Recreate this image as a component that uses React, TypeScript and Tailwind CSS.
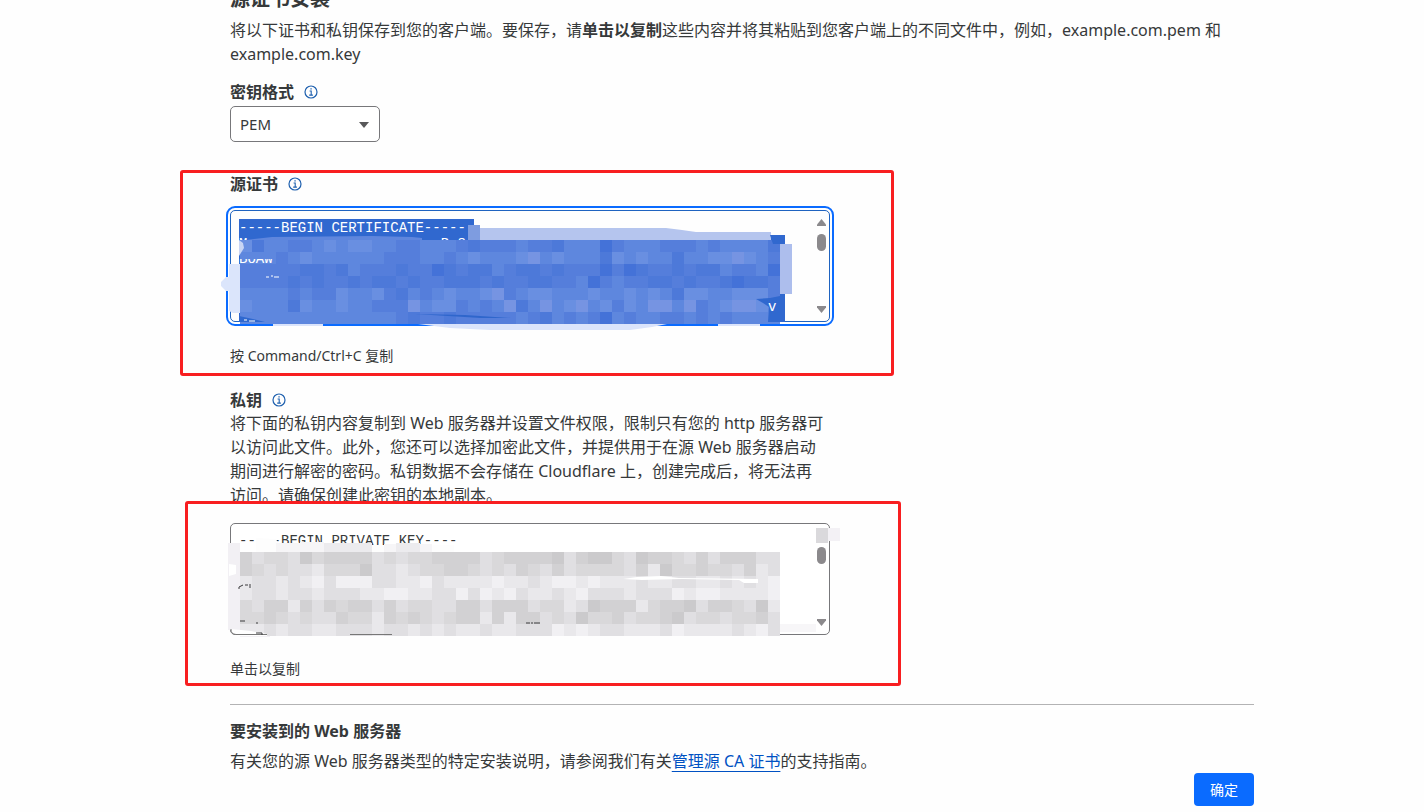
import React from 'react';

const BLUES: Record<string, string> = {
  a: '#4472d8',
  b: '#4d79d9',
  c: '#557edb',
  d: '#5e87de',
  e: '#698fe1',
  f: '#7694e2',
};

const GRAYS: Record<string, string> = {
  a: '#cbcacc',
  b: '#d2d1d3',
  c: '#d9d8da',
  d: '#e0dfe2',
  e: '#e9e8eb',
  f: '#f1f0f3',
};

// one letter per 12px block, 45 blocks per row
const CERT_BLOCKS = [
  'ebddccdedeeddccdddcbcccdccbdddacdddcccdcddddb',
  'dddcdeddddddcccddcdedddefdedddbededdbddeefedc',
  'cccccbbcbdcccbccabcbbdcbbcbcccacabccbcbbdccda',
  'ccccbcbccbcbbcbccbbbcbccbbccdacdccbbcbccbabbc',
  'ddddcdcceddecbdcdeddefcdeedddeddededbeeddeeec',
  'edddbeddeddcccfdeecdcdfbdfdefdecedffdfcdeffed',
  'dddddddddddddcbccbcccccdcbdcdcadcddccdcdcdddd',
];

const KEY_BLOCKS = [
  'bdccdacbbbbdcdccbbbbdcbbbbadbaacdabbcdbdbbbdd',
  'bcdcddecccaddedccbbcdcdbcdbdccccdbeaccbccdbed',
  'eddedefdfffddeefdeeeefeedeffefeeedeeddeededef',
  'eddeddedddeeffeeddfdfefdeedefdddedddfeffeeeef',
  'cdbbebdbcbbdbdccddbbdbbbdccedabbbecbbadbbcdae',
  'ccbcdcddbccebcbcdcbbebebbdcdaccbdccbadccdccbd',
  'eededdeedddeddededeedeedddfefeddeeedfeeeedefd',
];

const UI_FONT = "font-['Noto_Sans','Noto_Sans_CJK_SC',sans-serif]";
const MONO_FONT = "font-['Liberation_Mono',monospace]";

function Mosaic({ rows, palette, x, y }: { rows: string[]; palette: Record<string, string>; x: number; y: number }) {
  return (
    <g shapeRendering="crispEdges">
      {rows.map((row, r) =>
        row.split('').map((c, i) => (
          <rect key={`${r}-${i}`} x={x + i * 12} y={y + r * 12} width={12} height={12} fill={palette[c]} />
        )),
      )}
    </g>
  );
}

function InfoButton({ label }: { label: string }) {
  return (
    <button type="button" aria-label={label} className="text-[#1d5fae]">
      <svg width="14" height="14" viewBox="0 0 14 14" fill="none" stroke="currentColor">
        <circle cx="7" cy="7" r="6" strokeWidth="1.2" />
        <path d="M5.6 6h1.6v4M5.2 10.1h3.7" strokeWidth="1.1" />
        <path d="M6.4 3.9h1.3" strokeWidth="1.3" />
      </svg>
    </button>
  );
}

function Scrollbar({ hideUp = false }: { hideUp?: boolean }) {
  return (
    <svg className="pointer-events-none absolute right-[3px] top-0" width="11" height="112" viewBox="0 0 11 112" fill="#8b898c">
      {!hideUp && <path d="M5.5 9 10 14.5V16H1v-1.5z" />}
      <rect x="1" y="24" width="9" height="17" rx="4.5" />
      <path d="M1 96h9v1.500L5.500 103 1 97.500z" />
    </svg>
  );
}

function RedFrame({ className }: { className: string }) {
  return <div className={`pointer-events-none absolute rounded-[3px] border-3 border-[#f81e20] ${className}`} />;
}

function CertificateCover() {
  return (
    <svg className="pointer-events-none absolute -left-3 -top-1" width="600" height="130" viewBox="-12 -4 600 130">
      <defs>
        <clipPath id="cert-line">
          <rect x="9" y="49" width="38" height="4" />
        </clipPath>
      </defs>
      {/* smeared edges */}
      <path d="M250 18h186l16 2 14 2h75v9H250z" fill="#b5c5ee" />
      <path d="M238 15h12v15h-12z" fill="#7e9ce0" />
      <path d="M550 34h12v50h-12z" fill="#adbeed" />
      <path d="M-1 54h12v49H3l-4-2zM-9 72l5-5h5v14h-5l-5-5z" fill="#dbe5fb" />
      <path d="M180 113h262l-20 4-22 3H260l-40-2zM43 113h50v3H43zM488 113h42v3h-42z" fill="#dbe4fb" />
      <path d="M16 30l26-3 100-1 40 1 10 1v4H10z" fill="#5f86dd" />
      <Mosaic rows={CERT_BLOCKS} palette={BLUES} x={10} y={30} />
      {/* selected text that is still visible */}
      <path d="M9 30l4 3 1 5-5 8z" fill="#c9d5f4" />
      <path d="M9 106l14 3 12 3H9z" fill="#2f68cf" />
      <path d="M526 89l14-1 15-3v27h-17l1-15-6-4z" fill="#3068cf" />
      <path d="M540 25h15v9h-12z" fill="#3068cf" />
      <path d="M185 104l50 1 46 3h-30z" fill="#2f66cc" />
      <g className={`${MONO_FONT} text-[14px]`} fill="#fff">
        <text x="9" y="53" clipPath="url(#cert-line)">
          BQAw
        </text>
        <text x="538" y="101">
          v
        </text>
      </g>
      <path d="M36 67h3M41 66h2M44 67h5" stroke="#fff" />
      <path d="M14 110h3M19 111h6" stroke="#fff" />
    </svg>
  );
}

function PrivateKeyCover() {
  return (
    <svg className="pointer-events-none absolute -left-1 top-0" width="620" height="118" viewBox="-4 0 620 118">
      <path d="M26 15l20 1 2 4 42 1 30 1h104v8H26z" fill="#fdfdfd" />
      <path d="M-2 20h12v94h30v-4l-42-3z" fill="#f2f0f4" />
      <path d="M-1 41l7 1v9l-7 2z" fill="#fff" />
      <path d="M46 20h24v9H46zM70 19h24v10H70zM154 21h12v8h-12zM190 21h12v8h-12z" fill="#f6f5f7" />
      <path d="M94 20h48v9H94zM166 20h24v9h-24z" fill="#ecebee" />
      <Mosaic rows={KEY_BLOCKS} palette={GRAYS} x={10} y={29} />
      <path d="M393 56l14-2 24-1 18 2 79 1v4h-14l-5-3-57-1-40 1z" fill="#fff" />
      <path d="M550 101h36v8h-36z" fill="#f7f6f8" />
      <path d="M586 5h12v15h-12z" fill="#dad9dc" />
      <path d="M598 5h12v13h-12z" fill="#f3f1f5" />
      <path d="M1 106l20 2 16 3v2H8l-7-4z" fill="#fff" />
      <path d="M1 106v1q0 4 5 4.500H37M120 111.500h42" fill="none" stroke="#777" />
      <path d="M9 66v-2l4-2M15 62h3M20 61v4M10 98h5M26 100h2M26 110h6M32 110v2M296 100h4M302 99v2M304 100h6" fill="none" stroke="#3a3a3c" />
    </svg>
  );
}

export default function App() {
  return (
    <div className={`overflow-hidden bg-[#fefefe] pb-1.5 pl-[230px] pr-[170px] text-base text-[#36393a] ${UI_FONT}`}>
      <h2 className="-mt-4 mb-1 text-xl leading-[30px] font-bold">源证书安装</h2>
      <p className="leading-6">
        将以下证书和私钥保存到您的客户端。要保存，请<strong>单击以复制</strong>
        这些内容并将其粘贴到您客户端上的不同文件中，例如，example.com.pem 和 example.com.key
      </p>

      {/* Key format */}
      <div className="mt-[15px]">
        <div className="flex items-center gap-2.5">
          <label htmlFor="format" className="leading-[22px] font-bold">
            密钥格式
          </label>
          <InfoButton label="密钥格式说明" />
        </div>
        <div className="relative mt-[3px] w-[150px]">
          <select
            id="format"
            className="h-9 w-full appearance-none rounded-[5px] border border-[#77777a] bg-white px-[9px] text-[15px]"
          >
            <option>PEM</option>
            <option>DER</option>
          </select>
          <svg className="pointer-events-none absolute right-[11px] top-4" width="10" height="6" viewBox="0 0 10 6" fill="#58585a">
            <path d="M0 0h10L5 6z" />
          </svg>
        </div>
      </div>

      {/* Certificate */}
      <section className="relative mt-[31px] w-[600px]">
        <div className="flex items-center gap-2.5">
          <label htmlFor="certificate" className="leading-[22px] font-bold">
            源证书
          </label>
          <InfoButton label="源证书说明" />
        </div>
        <div className="relative mt-[15px] h-28">
          <svg className="absolute left-0 top-0" width="600" height="112" viewBox="0 0 600 112" fill="#3068cf">
            <path d="M9 9h235v16h311v87H9z" />
          </svg>
          <textarea
            id="certificate"
            readOnly
            className={`relative block h-full w-full resize-none overflow-hidden rounded-[5px] border border-[#1f63c0] px-2 py-[9px] text-[14px] leading-4 text-white outline-2 outline-offset-2 outline-[#0a6bff] ${MONO_FONT}`}
            defaultValue={'-----BEGIN CERTIFICATE-----\nM                       B 8 I'}
          />
          <CertificateCover />
          <Scrollbar />
        </div>
        <p className="mt-6 text-sm leading-5">按 Command/Ctrl+C 复制</p>
        <RedFrame className="-bottom-2.5 -left-[50px] -right-[64px] -top-[3px]" />
      </section>

      {/* Private key */}
      <section className="mt-[23px] w-[600px]">
        <div className="flex items-center gap-2.5">
          <label htmlFor="private-key" className="leading-[22px] font-bold">
            私钥
          </label>
          <InfoButton label="私钥说明" />
        </div>
        <p className="pr-1 leading-6">
          将下面的私钥内容复制到 Web 服务器并设置文件权限，限制只有您的 http 服务器可以访问此文件。此外，您还可以选择加密此文件，并提供用于在源
          Web 服务器启动期间进行解密的密码。私钥数据不会存储在 Cloudflare 上，创建完成后，将无法再访问。请确保创建此密钥的本地副本。
        </p>
        <div className="relative pt-4">
          <div className="relative h-28">
            <textarea
              id="private-key"
              readOnly
              className={`block h-full w-full resize-none overflow-hidden rounded-[5px] border border-[#77777a] bg-white px-2 py-[9px] text-[14px] leading-4 ${MONO_FONT}`}
              defaultValue="-----BEGIN PRIVATE KEY----"
            />
            <PrivateKeyCover />
            <Scrollbar hideUp />
          </div>
          <p className="mt-6 text-sm leading-5">单击以复制</p>
          <RedFrame className="-bottom-[7px] -left-[45px] -right-[71px] -top-[6px]" />
        </div>
      </section>

      <hr className="mt-[25px] border-[#b3b3b4]" />

      <h3 className="mt-[14px] leading-6 font-bold">要安装到的 Web 服务器</h3>
      <p className="mt-1.5 leading-6">
        有关您的源 Web 服务器类型的特定安装说明，请参阅我们有关
        <a href="#origin-ca" className="text-[#0051c3] underline decoration-1 underline-offset-4">
          管理源 CA 证书
        </a>
        的支持指南。
      </p>
      <div className="flex justify-end">
        <button type="button" className="h-[33px] w-[60px] rounded-[4px] bg-[#0a6bff] text-sm text-white">
          确定
        </button>
      </div>
    </div>
  );
}
